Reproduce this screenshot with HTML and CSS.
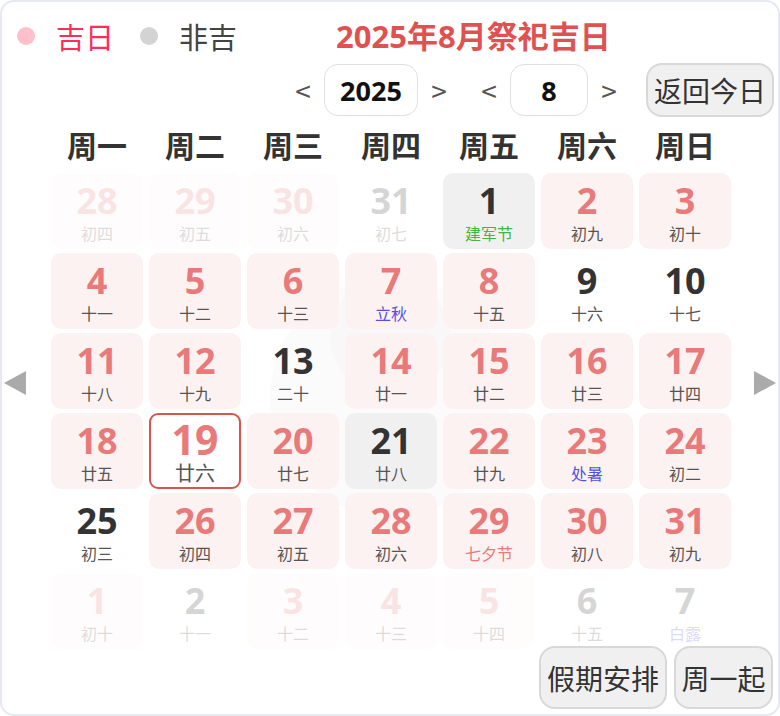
FILE: index.html
```html
<!DOCTYPE html>
<html lang="zh">
<head>
<meta charset="utf-8">
<title>2025年8月祭祀吉日</title>
<link rel="stylesheet" href="styles.css">
</head>
<body>
<div class="cal">
  <div class="top">
    <span class="dot dot-pink"></span><span class="leg leg-ji">吉日</span>
    <span class="dot dot-gray"></span><span class="leg">非吉</span>
    <h1 class="title">2025年8月祭祀吉日</h1>
  </div>
  <div class="ctrl">
    <span class="arr">&lt;</span><div class="box box-year">2025</div><span class="arr arr-gap">&gt;</span>
    <span class="arr">&lt;</span><div class="box box-month">8</div><span class="arr">&gt;</span>
    <button class="btn btn-today">返回今日</button>
  </div>
  <div class="body">
    <svg class="wm" width="260" height="260" viewBox="0 0 260 260"><circle cx="130" cy="130" r="120" fill="#000" fill-opacity="0.014"/><circle cx="130" cy="70" r="60" fill="#000" fill-opacity="0.01"/></svg>
    <div class="side side-l"><svg width="22" height="24" viewBox="0 0 22 24"><polygon points="22,0 22,24 0,12" fill="#aaaaaa"/></svg></div>
    <div class="main">
      <div class="week">
        <span>周一</span><span>周二</span><span>周三</span><span>周四</span><span>周五</span><span>周六</span><span>周日</span>
      </div>
      <div class="grid">
        <div class="cell ji other"><b>28</b><i>初四</i></div>
        <div class="cell ji other"><b>29</b><i>初五</i></div>
        <div class="cell ji other"><b>30</b><i>初六</i></div>
        <div class="cell other"><b>31</b><i>初七</i></div>
        <div class="cell gray"><b>1</b><i class="fest-green">建军节</i></div>
        <div class="cell ji"><b>2</b><i>初九</i></div>
        <div class="cell ji"><b>3</b><i>初十</i></div>

        <div class="cell ji"><b>4</b><i>十一</i></div>
        <div class="cell ji"><b>5</b><i>十二</i></div>
        <div class="cell ji"><b>6</b><i>十三</i></div>
        <div class="cell ji"><b>7</b><i class="term">立秋</i></div>
        <div class="cell ji"><b>8</b><i>十五</i></div>
        <div class="cell"><b>9</b><i>十六</i></div>
        <div class="cell"><b>10</b><i>十七</i></div>

        <div class="cell ji"><b>11</b><i>十八</i></div>
        <div class="cell ji"><b>12</b><i>十九</i></div>
        <div class="cell"><b>13</b><i>二十</i></div>
        <div class="cell ji"><b>14</b><i>廿一</i></div>
        <div class="cell ji"><b>15</b><i>廿二</i></div>
        <div class="cell ji"><b>16</b><i>廿三</i></div>
        <div class="cell ji"><b>17</b><i>廿四</i></div>

        <div class="cell ji"><b>18</b><i>廿五</i></div>
        <div class="cell today"><b>19</b><i>廿六</i></div>
        <div class="cell ji"><b>20</b><i>廿七</i></div>
        <div class="cell gray"><b>21</b><i>廿八</i></div>
        <div class="cell ji"><b>22</b><i>廿九</i></div>
        <div class="cell ji"><b>23</b><i class="term">处暑</i></div>
        <div class="cell ji"><b>24</b><i>初二</i></div>

        <div class="cell"><b>25</b><i>初三</i></div>
        <div class="cell ji"><b>26</b><i>初四</i></div>
        <div class="cell ji"><b>27</b><i>初五</i></div>
        <div class="cell ji"><b>28</b><i>初六</i></div>
        <div class="cell ji"><b>29</b><i class="fest-red">七夕节</i></div>
        <div class="cell ji"><b>30</b><i>初八</i></div>
        <div class="cell ji"><b>31</b><i>初九</i></div>

        <div class="cell ji other"><b>1</b><i>初十</i></div>
        <div class="cell other"><b>2</b><i>十一</i></div>
        <div class="cell ji other"><b>3</b><i>十二</i></div>
        <div class="cell ji other"><b>4</b><i>十三</i></div>
        <div class="cell ji other"><b>5</b><i>十四</i></div>
        <div class="cell other"><b>6</b><i>十五</i></div>
        <div class="cell other"><b>7</b><i class="term">白露</i></div>
      </div>
    </div>
    <div class="side side-r"><svg width="22" height="24" viewBox="0 0 22 24"><polygon points="0,0 0,24 22,12" fill="#aaaaaa"/></svg></div>
  </div>
  <div class="foot">
    <button class="btn btn-hol">假期安排</button>
    <button class="btn btn-week">周一起</button>
  </div>
</div>
</body>
</html>
```

FILE: styles.css
```css
* { box-sizing: border-box; }
html, body { margin: 0; padding: 0; background: #ffffff; }
body {
  font-family: "Open Sans", "Noto Sans CJK SC", sans-serif;
  color: #333333;
}
.cal {
  width: 780px;
  height: 716px;
  border: 2px solid #e6e9f4;
  border-radius: 14px;
  padding: 14px 0 0 0;
  background: #ffffff;
  position: relative;
}
.top {
  display: flex;
  align-items: center;
  height: 40px;
  padding-left: 15px;
}
.dot {
  width: 18px;
  height: 18px;
  border-radius: 50%;
  flex: none;
}
.dot-pink { background: #ffc0cb; }
.dot-gray { background: #d3d3d3; margin-left: 26px; }
.leg {
  font-family: "Noto Sans CJK SC", sans-serif;
  font-size: 29px;
  line-height: 40px;
  color: #444444;
  margin-left: 21px;
}
.leg-ji { color: #ff2d5a; }
.title {
  margin: 0 0 0 99px;
  font-size: 31px;
  line-height: 40px;
  font-weight: 700;
  color: #e05252;
  font-family: "Open Sans", "Noto Sans CJK SC", sans-serif;
}
.ctrl {
  display: flex;
  align-items: center;
  justify-content: flex-end;
  height: 54px;
  margin-top: 7px;
  padding-right: 4px;
}
.arr {
  width: 28px;
  margin: 0 7px;
  text-align: center;
  font-family: "Noto Sans CJK SC", sans-serif;
  font-size: 28px;
  line-height: 34px;
  color: #555555;
}
.arr-gap { margin-right: 15px; }
.box {
  height: 52px;
  border: 1px solid #e0e0e4;
  border-radius: 14px;
  display: flex;
  align-items: center;
  justify-content: center;
  font-weight: 700;
  font-size: 27px;
  color: #111111;
}
.box-year { width: 94px; }
.box-month { width: 78px; }
.btn {
  font-family: "Noto Sans CJK SC", sans-serif;
  font-size: 28px;
  color: #333333;
  background: #f0f0f0;
  border: 2px solid #d8d8d8;
  border-radius: 16px;
  padding: 0;
  display: flex;
  align-items: center;
  justify-content: center;
}
.btn-today { width: 128px; height: 54px; margin-left: 16px; }
.body {
  display: flex;
  align-items: center;
  position: relative;
}
.wm {
  position: absolute;
  left: 258px;
  top: 150px;
  pointer-events: none;
}
.side {
  display: flex;
  align-items: center;
}
.side-l { width: 49px; padding-left: 2px; }
.side-r { width: 47px; padding-left: 23px; }
.main { width: 680px; position: relative; }
.week {
  display: grid;
  grid-template-columns: repeat(7, 92px);
  column-gap: 6px;
  margin-top: 7px;
  height: 40px;
}
.week span {
  text-align: center;
  font-family: "Noto Sans CJK SC", sans-serif;
  font-weight: 700;
  font-size: 30px;
  line-height: 40px;
  color: #333333;
}
.grid {
  display: grid;
  grid-template-columns: repeat(7, 92px);
  grid-auto-rows: 76px;
  gap: 4px 6px;
  margin-top: 9px;
}
.cell {
  border-radius: 10px;
  display: flex;
  flex-direction: column;
  align-items: center;
  padding-top: 9px;
}
.cell b {
  display: block;
  font-weight: 700;
  font-size: 36px;
  line-height: 38px;
  color: #333333;
}
.cell i {
  display: block;
  font-style: normal;
  font-family: "Noto Sans CJK SC", sans-serif;
  font-size: 16px;
  line-height: 24px;
  margin-top: 1px;
  color: #555555;
}
.cell.ji { background: #fdf2f2; }
.cell.ji b { color: #e87a7a; }
.cell.gray { background: #f0f0f0; }
.cell.other { opacity: 0.2; }
.cell.today {
  border: 2px solid #d9534f;
  border-radius: 9px;
  padding-top: 5px;
}
.cell.today b { color: #e87a7a; font-size: 41px; line-height: 38px; }
.cell.today i { font-size: 20px; line-height: 26px; margin-top: 2px; }
.fest-green { color: #43b543 !important; }
.fest-red { color: #e87a7a !important; }
.term { color: #5050e6 !important; }
.foot {
  display: flex;
  justify-content: flex-end;
  gap: 7px;
  margin-top: -3px;
  padding-right: 5px;
  position: relative;
}
.btn-hol { width: 128px; height: 63px; }
.btn-week { width: 99px; height: 63px; }
```
